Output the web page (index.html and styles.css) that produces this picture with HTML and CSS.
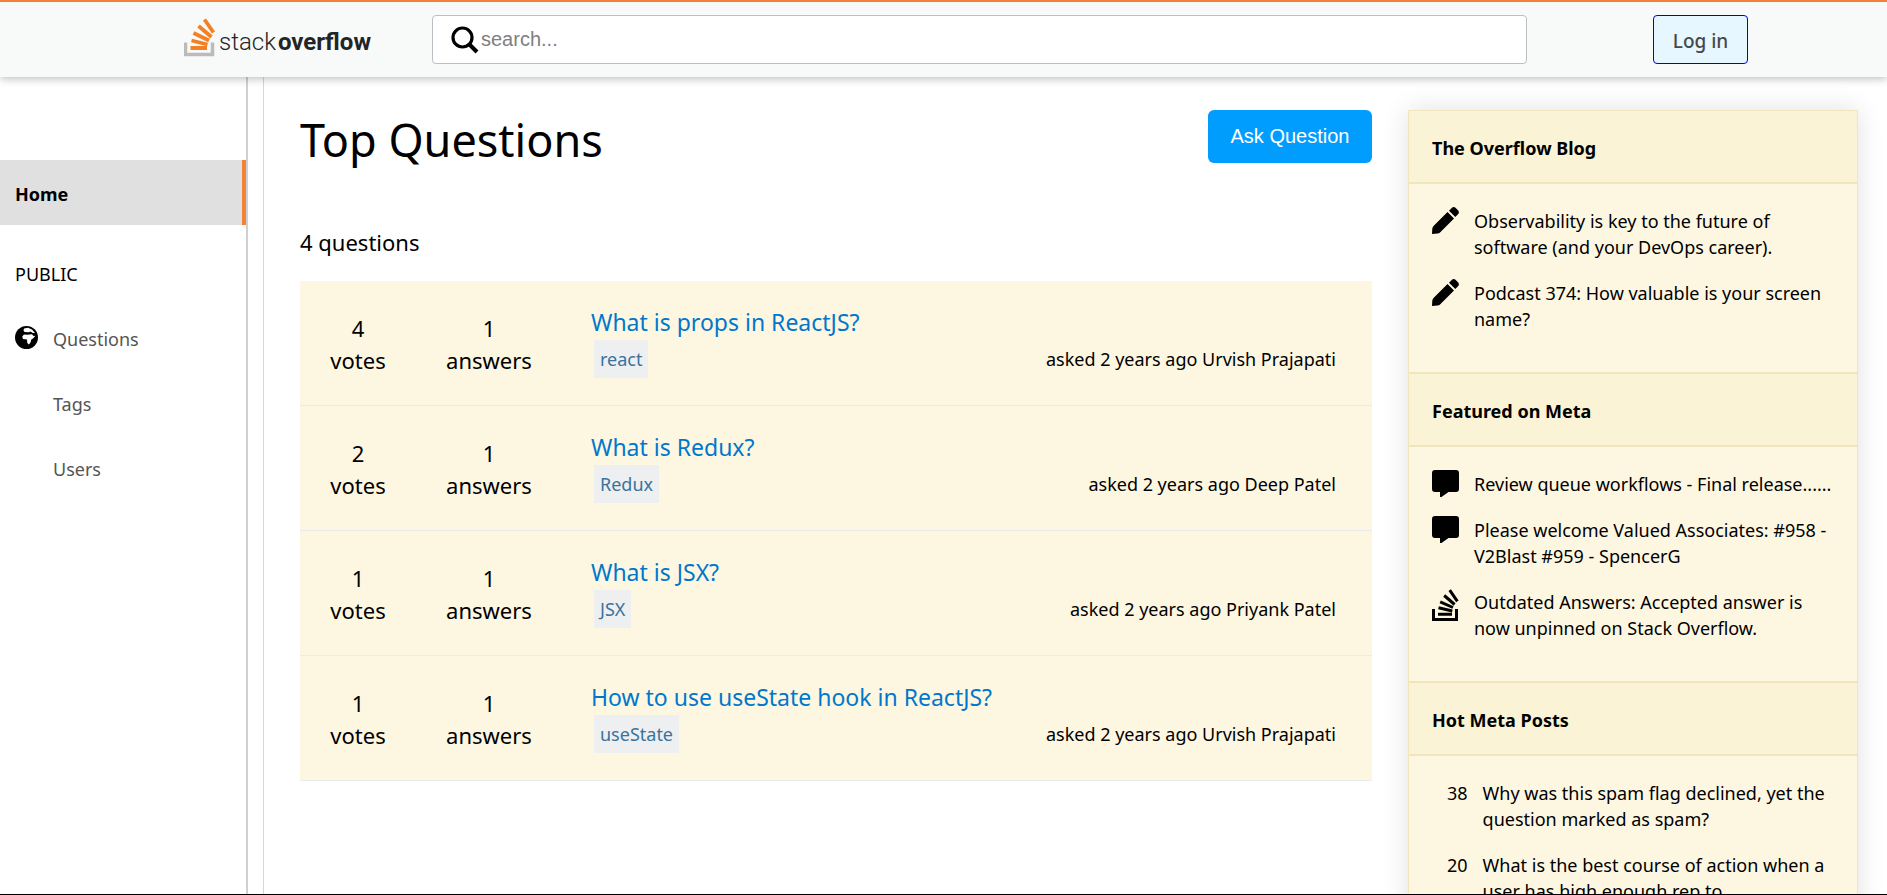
FILE: index.html
```html
<!DOCTYPE html>
<html lang="en">
<head>
<meta charset="utf-8">
<title>Stack Overflow</title>
<link rel="stylesheet" href="styles.css">
</head>
<body>
<svg class="sprite" aria-hidden="true">
  <symbol id="pencil" viewBox="0 0 27 27"><path d="M15.500 5L22 11.500L8 25.500Q7 26.500 5.500 26.600L0 27L0.300 21.500Q0.500 20 1.500 19ZM17 3.800L19.500 1.200Q21.500-0.800 23.500 0.800L26 3.300Q27.800 5.200 26 7.200L23.300 10Z"/></symbol>
  <symbol id="bubble" viewBox="0 0 27 27"><path d="M3 0H24Q27 0 27 3V19Q27 22 24 22H16.500L9.500 27H8V22H3Q0 22 0 19V3Q0 0 3 0Z"/></symbol>
  <symbol id="stack" viewBox="0 0 27 32"><path d="M1.500 20V30.500H24.500V20" fill="none" stroke="currentColor" stroke-width="3"/><path d="M6 25.200H20M6.500 18.700L20.300 22M8.200 12.800L21 18.500M12.200 6.500L22.600 15.500M17.700 1.200L25.400 12.300" fill="none" stroke="currentColor" stroke-width="3"/></symbol>
</svg>
<div class="page">
  <header class="topbar">
    <a class="logo" href="#" aria-label="Stack Overflow">
      <svg width="200" height="48" viewBox="0 0 200 48">
        <path d="M1.500 26.500V38.500H28.500V26.500" fill="none" stroke="#bcbbbb" stroke-width="3.500"/>
        <path d="M6.500 32H23M7.500 24.500L23.500 28.500M9.500 17L25 24.500M14.500 10L27.500 21M20.500 3.500L29.500 16.500" fill="none" stroke="#f48024" stroke-width="3.800"/>
        <text class="logo-text" x="35" y="34">stack</text>
        <text class="logo-text logo-bold" x="94" y="34">overflow</text>
      </svg>
    </a>
    <label class="search">
      <svg width="28" height="28" viewBox="0 0 28 28" fill="none" stroke="#000"><circle cx="11.500" cy="11.500" r="9.500" stroke-width="3.200"/><path d="M18.500 18.500L26 26" stroke-width="4"/></svg>
      <input type="text" placeholder="search..." aria-label="Search">
    </label>
    <button class="login" type="button">Log in</button>
  </header>
  <div class="body">
    <nav class="sidebar">
      <a class="nav-item active" href="#">Home</a>
      <div class="nav-item nav-label">PUBLIC</div>
      <a class="nav-item sub" href="#"><svg class="globe" width="23" height="23" viewBox="0 0 23 23"><circle cx="11.500" cy="11.500" r="11.500"/><path fill="#fff" d="M9 2.500L13 1.800L17 3.500L20 7L17.800 7L15.500 5.500L14 6.300L9.500 6L8.500 4.500ZM9 8.500L12 8.800L17 8.300L18.500 10L20.500 9.800L18 12.500L16.300 13.500L15.500 16.500L13.800 18.500L12.300 17L12 13.500L8 13L7.200 10.500Z"/></svg>Questions</a>
      <a class="nav-item sub" href="#">Tags</a>
      <a class="nav-item sub" href="#">Users</a>
    </nav>
    <main class="main">
      <div class="main-head">
        <h1>Top Questions</h1>
        <button class="ask" type="button">Ask Question</button>
      </div>
      <p class="count">4 questions</p>
      <section class="list">
        <article class="question">
          <div class="stat votes"><span>4</span><span>votes</span></div>
          <div class="stat answers"><span>1</span><span>answers</span></div>
          <div class="summary"><a class="title" href="#">What is props in ReactJS?</a>
            <div class="meta"><span class="tag">react</span><span>asked 2 years ago Urvish Prajapati</span></div></div>
        </article>
        <article class="question">
          <div class="stat votes"><span>2</span><span>votes</span></div>
          <div class="stat answers"><span>1</span><span>answers</span></div>
          <div class="summary"><a class="title" href="#">What is Redux?</a>
            <div class="meta"><span class="tag">Redux</span><span>asked 2 years ago Deep Patel</span></div></div>
        </article>
        <article class="question">
          <div class="stat votes"><span>1</span><span>votes</span></div>
          <div class="stat answers"><span>1</span><span>answers</span></div>
          <div class="summary"><a class="title" href="#">What is JSX?</a>
            <div class="meta"><span class="tag">JSX</span><span>asked 2 years ago Priyank Patel</span></div></div>
        </article>
        <article class="question">
          <div class="stat votes"><span>1</span><span>votes</span></div>
          <div class="stat answers"><span>1</span><span>answers</span></div>
          <div class="summary"><a class="title" href="#">How to use useState hook in ReactJS?</a>
            <div class="meta"><span class="tag">useState</span><span>asked 2 years ago Urvish Prajapati</span></div></div>
        </article>
      </section>
    </main>
    <aside class="widget">
      <h2>The Overflow Blog</h2>
      <ul>
        <li><svg class="icon"><use href="#pencil"/></svg><p>Observability is key to the future of software (and your DevOps career).</p></li>
        <li><svg class="icon"><use href="#pencil"/></svg><p>Podcast 374: How valuable is your screen name?</p></li>
      </ul>
      <h2>Featured on Meta</h2>
      <ul>
        <li><svg class="icon"><use href="#bubble"/></svg><p>Review queue workflows - Final release......</p></li>
        <li><svg class="icon"><use href="#bubble"/></svg><p>Please welcome Valued Associates: #958 - V2Blast #959 - SpencerG</p></li>
        <li><svg class="icon tall"><use href="#stack"/></svg><p>Outdated Answers: Accepted answer is<br>now unpinned on Stack Overflow.</p></li>
      </ul>
      <h2>Hot Meta Posts</h2>
      <ul class="hot">
        <li><span class="score">38</span><p>Why was this spam flag declined, yet the question marked as spam?</p></li>
        <li><span class="score">20</span><p>What is the best course of action when a user has high enough rep to</p></li>
      </ul>
    </aside>
  </div>
</div>
</body>
</html>
```
FILE: styles.css
```css
* { box-sizing: border-box; }
body { margin: 0; font: 18px/26px "Noto Sans", "Open Sans", sans-serif; color: #000; background: #fff; }
h1, h2, p, ul { margin: 0; padding: 0; }
a { text-decoration: none; color: inherit; }
.sprite { position: absolute; width: 0; height: 0; }
.page { display: flex; flex-direction: column; height: 100vh; overflow: hidden; border-bottom: 1px solid #000; }

.topbar { display: flex; align-items: center; flex: none; height: 77px; padding: 0 139px 0 184px; border-top: 2px solid #f48236; background: #f8f9f9; box-shadow: 0 2px 8px rgba(0, 0, 0, 0.25); z-index: 1; }
.logo { display: flex; width: 248px; }
.logo-text { font: 300 24px Roboto, "Liberation Sans", sans-serif; fill: #222426; }
.logo-bold { font-weight: 700; }
.search { display: flex; flex: 1; align-items: center; gap: 2px; height: 49px; padding: 0 18px; border: 1px solid #babfc4; border-radius: 4px; background: #fff; }
.search input { flex: 1; border: 0; outline: 0; padding: 0; background: none; font: 20px "Liberation Sans", Arial, sans-serif; }
.search input::placeholder { color: #808080; }
.login { width: 95px; height: 49px; margin-left: 126px; padding: 2px 0 0; border: 1px solid #0000e6; border-radius: 4px; background: #e6f7ff; color: #484848; font: 500 19px "Noto Sans", sans-serif; }

.body { display: flex; flex: 1; min-height: 0; }
.sidebar { flex: none; width: 248px; padding-top: 83px; border-right: 2px solid #d0d0d0; }
.nav-item { display: block; height: 65px; padding: 21px 15px 17px; line-height: 27px; color: #555; }
.nav-item.active { background: #e0e0e0; border-right: 4px solid #f48236; color: #000; font-weight: 700; }
.nav-label { margin-top: 15px; color: #000; }
.sub { display: flex; padding-left: 53px; }
.globe { flex: none; margin: 0 15px 0 -38px; }

.main { flex: 1; margin-left: 15px; padding: 33px 36px 0; border-left: 1px solid #d6d6d6; }
.main-head { display: flex; justify-content: space-between; align-items: flex-start; height: 114px; }
h1 { font-size: 45px; line-height: 60px; font-weight: 400; }
.ask { width: 164px; height: 53px; border: 0; border-radius: 6px; padding: 0; background: #009dff; color: #fff; font: 20px "Liberation Sans", Arial, sans-serif; }
.count { padding-top: 2px; height: 57px; font-size: 22px; line-height: 32px; }
.question { display: flex; height: 125px; padding: 30px 36px 0 30px; border-bottom: 1px solid #eaebee; background: #fdf7e2; }
.stat { display: flex; flex-direction: column; align-items: center; padding-top: 1px; font-size: 22px; line-height: 32px; }
.votes { width: 56px; }
.answers { width: 84px; margin-left: 61px; }
.summary { flex: 1; margin-left: 60px; }
.title { display: block; height: 29px; font-size: 23px; line-height: 22px; color: #0077cc; }
.meta { display: flex; justify-content: space-between; align-items: center; height: 38px; line-height: 28px; }
.tag { margin-left: 3px; padding: 5px 6px; background: #edeff1; color: #39739d; }

.widget { flex: none; align-self: flex-start; width: 450px; margin: 33px 29px 0 0; border: 1px solid #f1e5bc; background: #fdf7e2; box-shadow: 0 0 25px rgba(0, 0, 0, 0.12); }
.widget h2 { height: 73px; padding: 24px 23px 0; border-bottom: 2px solid #f1e5bc; background: #fbf3d5; font-size: 18px; line-height: 26px; }
.widget ul { display: flex; flex-direction: column; gap: 20px; padding: 24px 16px 40px 23px; border-bottom: 2px solid #f1e5bc; list-style: none; }
.widget li { display: flex; gap: 15px; }
.icon { flex: none; width: 27px; height: 27px; margin-top: -1px; }
.icon.tall { height: 32px; margin-top: 0; }
.widget .hot { padding-left: 38px; }
.score { width: 21px; }
```
